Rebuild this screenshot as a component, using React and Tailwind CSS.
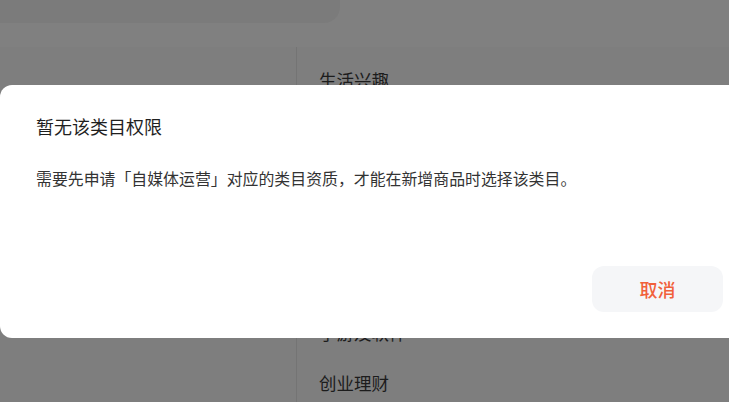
import React from "react";

const categories = ["生活兴趣", "教育培训", "美食饮品", "旅游出行", "运动健康", "手游及软件", "创业理财"];

export default function App() {
  return (
    <div
      className="relative w-[729px] h-[402px] overflow-hidden bg-[#808080]"
      style={{ fontFamily: '"Noto Sans CJK SC", "Noto Sans", sans-serif' }}
    >
      {/* page behind the mask */}
      <div className="h-[47px]">
        <div className="w-[340px] h-[23px] bg-[#7b7b7b] rounded-br-[16px]" />
      </div>
      <div className="flex h-[355px] bg-[#7e7e7e]">
        <div className="w-[297px] border-r border-[#747474]" />
        <div className="flex-1 pl-[22px] pt-[8px]">
          {categories.map((c) => (
            <div key={c} className="h-[50.5px] flex items-center text-[17.5px] text-[#1c1c1c]">
              {c}
            </div>
          ))}
        </div>
      </div>

      {/* dialog */}
      <div className="absolute left-0 top-[85px] w-[759px] h-[253px] bg-white rounded-[12px] px-[36px] pt-[27px] pb-[26px] flex flex-col">
        <h2 className="text-[18px] leading-[28px] font-normal text-[#1f1f1f]">暂无该类目权限</h2>
        <p className="mt-[27px] text-[15.9px] leading-[24px] text-[#333333]">
          需要先申请「自媒体运营」对应的类目资质，才能在新增商品时选择该类目。
        </p>
        <div className="mt-auto flex justify-end">
          <button className="w-[131px] h-[46px] rounded-[12px] bg-[#f5f6f8] text-[18px] font-medium text-[#f1603a]">
            取消
          </button>
        </div>
      </div>
    </div>
  );
}
